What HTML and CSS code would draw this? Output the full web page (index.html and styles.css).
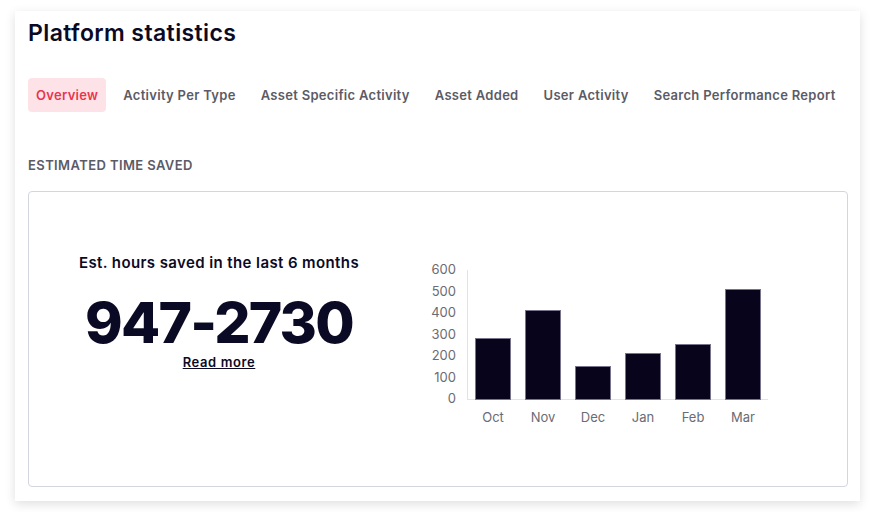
FILE: index.html
```html
<!DOCTYPE html>
<html lang="en">
<head>
<meta charset="utf-8">
<title>Platform statistics</title>
<link rel="stylesheet" href="styles.css">
</head>
<body>
<main class="card">
  <h1 class="title">Platform statistics</h1>
  <nav class="tabs">
    <a class="tab active">Overview</a>
    <a class="tab">Activity Per Type</a>
    <a class="tab">Asset Specific Activity</a>
    <a class="tab">Asset Added</a>
    <a class="tab">User Activity</a>
    <a class="tab">Search Performance Report</a>
  </nav>
  <h2 class="section-label">ESTIMATED TIME SAVED</h2>
  <section class="panel">
    <div class="summary">
      <p class="summary-caption">Est. hours saved in the last 6 months</p>
      <p class="summary-value">947-2730</p>
      <a class="summary-link">Read more</a>
    </div>
    <svg class="chart" width="370" height="172" viewBox="0 0 370 172">
      <g class="ticks">
        <text x="36" y="15">600</text>
        <text x="36" y="36.5">500</text>
        <text x="36" y="58">400</text>
        <text x="36" y="79.5">300</text>
        <text x="36" y="101">200</text>
        <text x="36" y="122.5">100</text>
        <text x="36" y="144">0</text>
      </g>
      <line class="axis" x1="47.5" y1="11" x2="47.5" y2="140.5"/>
      <line class="axis" x1="47" y1="140.5" x2="348" y2="140.5"/>
      <g class="bars">
        <rect x="55.5" y="79.5" width="35" height="61"/>
        <rect x="105.5" y="51.5" width="35" height="89"/>
        <rect x="155.5" y="107.5" width="35" height="33"/>
        <rect x="205.5" y="94.5" width="35" height="46"/>
        <rect x="255.5" y="85.5" width="35" height="55"/>
        <rect x="305.5" y="30.5" width="35" height="110"/>
      </g>
      <g class="months">
        <text x="73" y="163">Oct</text>
        <text x="123" y="163">Nov</text>
        <text x="173" y="163">Dec</text>
        <text x="223" y="163">Jan</text>
        <text x="273" y="163">Feb</text>
        <text x="323" y="163">Mar</text>
      </g>
    </svg>
  </section>
</main>
</body>
</html>
```

FILE: styles.css
```css
* { box-sizing: border-box; }
html, body { margin: 0; background: #ffffff; }
body {
  padding: 11px 15px;
  font-family: Inter, "Open Sans", sans-serif;
  color: #0b0a24;
}
.card {
  width: 845px;
  height: 490px;
  background: #fff;
  box-shadow: 0 3px 10px rgba(0, 0, 0, 0.13);
  padding: 8px 12px 0 13px;
  display: flex;
  flex-direction: column;
}
.title {
  margin: 0;
  font-size: 23px;
  line-height: 28px;
  font-weight: 600;
  letter-spacing: 0.4px;
  color: #0b0a24;
}
.tabs {
  display: flex;
  align-items: center;
  margin-top: 31px;
  gap: 9px;
}
.tab {
  flex: 0 0 auto;
  white-space: nowrap;
  font-size: 13px;
  font-weight: 600;
  letter-spacing: 0.3px;
  color: #5b5b66;
  line-height: 34px;
  height: 34px;
  padding: 0 8px;
  border-radius: 4px;
}
.tab.active {
  background: #fde3e7;
  color: #ea3550;
}
.section-label {
  margin: 45px 0 0;
  font-size: 13px;
  line-height: 16px;
  font-weight: 600;
  color: #5b5b66;
  letter-spacing: 0.4px;
}
.panel {
  margin-top: 18px;
  height: 296px;
  border: 1px solid #d3d6de;
  border-radius: 4px;
  display: flex;
  align-items: flex-start;
}
.summary {
  width: 380px;
  padding-top: 61px;
  display: flex;
  flex-direction: column;
  align-items: center;
}
.summary-caption {
  margin: 0;
  font-size: 15px;
  line-height: 20px;
  font-weight: 600;
  letter-spacing: 0.4px;
  color: #0b0a24;
}
.summary-value {
  margin: 21px 0 0;
  font-size: 57px;
  line-height: 57px;
  font-weight: 800;
  letter-spacing: -1.8px;
  color: #0b0a24;
}
.summary-link {
  margin-top: 3px;
  font-size: 13px;
  line-height: 16px;
  font-weight: 600;
  letter-spacing: 0.6px;
  text-decoration: underline;
  color: #0b0a24;
}
.chart {
  margin-left: 11px;
  margin-top: 67px;
  display: block;
}
.chart text {
  font-family: Inter, "Open Sans", sans-serif;
  font-size: 13px;
  fill: #6b6b73;
}
.ticks text { text-anchor: end; }
.months text { text-anchor: middle; }
.axis { stroke: #e3e3e6; stroke-width: 1; }
.bars rect { fill: #07041c; stroke: #77748c; stroke-width: 1; }
```
